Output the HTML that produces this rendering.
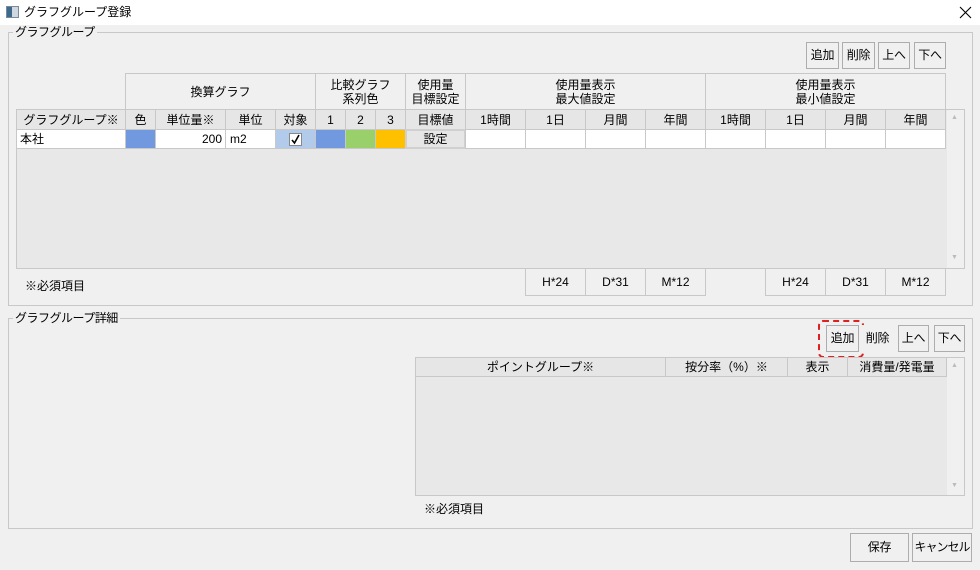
<!DOCTYPE html>
<html><head><meta charset="utf-8">
<style>
*{box-sizing:border-box;margin:0;padding:0}
html,body{width:980px;height:570px;overflow:hidden}
body{background:#f0f0f0;font-family:"Liberation Sans","Noto Sans CJK JP",sans-serif;font-size:12px;color:#000;position:relative}
.a{position:absolute;white-space:nowrap}
.tb{left:0;top:0;width:980px;height:25px;background:#fff}
.gb{border:1px solid #c8c8c8}
.lg{background:#f0f0f0;padding:0 2px;line-height:14px;font-size:12px;letter-spacing:-0.5px}
.btn{border:1px solid #adadad;background:#f0f0f0;text-align:center;line-height:24px;font-size:12px;letter-spacing:-0.3px}
.c{border:1px solid #c8c8c8;text-align:center;display:flex;align-items:center;justify-content:center;line-height:14px;font-size:12px}
.h1{background:#f0f0f0}
.h2{background:#e6e6e6}
.w{background:#fff}
</style></head><body>
<div class="a tb"></div>
<div class="a" style="left:6px;top:6px;width:13px;height:12px;border:1px solid #7a8a9a;background:linear-gradient(90deg,#3b6a8c 0 45%,#cfd8e0 45%)"></div>
<div class="a" style="left:24px;top:4px;line-height:16px">グラフグループ登録</div>
<svg class="a" style="left:959px;top:6px" width="13" height="13"><path d="M1 1L12 12M12 1L1 12" stroke="#000" stroke-width="1.1"/></svg>

<div class="a gb" style="left:8px;top:32px;width:965px;height:274px"></div>
<div class="a lg" style="left:13px;top:25px">グラフグループ</div>
<div class="a btn" style="left:806px;top:42px;width:33px;height:27px">追加</div>
<div class="a btn" style="left:842px;top:42px;width:33px;height:27px">削除</div>
<div class="a btn" style="left:878px;top:42px;width:32px;height:27px">上へ</div>
<div class="a btn" style="left:914px;top:42px;width:32px;height:27px">下へ</div>

<div class="a" style="left:16px;top:109px;width:949px;height:160px;background:#e8e8e8;border:1px solid #c8c8c8"></div>
<div class="a" style="left:947px;top:110px;width:17px;height:158px;background:#f0f0f0"></div>
<div class="a" style="left:951px;top:114px;color:#bbb;font-size:7px">▲</div>
<div class="a" style="left:951px;top:254px;color:#bbb;font-size:7px">▼</div>

<div class="a c h1" style="left:125px;top:73px;width:191px;height:37px">換算グラフ</div>
<div class="a c h1" style="left:315px;top:73px;width:91px;height:37px">比較グラフ<br>系列色</div>
<div class="a c h1" style="left:405px;top:73px;width:61px;height:37px">使用量<br>目標設定</div>
<div class="a c h1" style="left:465px;top:73px;width:241px;height:37px">使用量表示<br>最大値設定</div>
<div class="a c h1" style="left:705px;top:73px;width:241px;height:37px">使用量表示<br>最小値設定</div>

<div class="a c h2" style="left:16px;top:109px;width:110px;height:21px">グラフグループ※</div>
<div class="a c h2" style="left:125px;top:109px;width:31px;height:21px">色</div>
<div class="a c h2" style="left:155px;top:109px;width:71px;height:21px">単位量※</div>
<div class="a c h2" style="left:225px;top:109px;width:51px;height:21px">単位</div>
<div class="a c h2" style="left:275px;top:109px;width:41px;height:21px">対象</div>
<div class="a c h2" style="left:315px;top:109px;width:31px;height:21px">1</div>
<div class="a c h2" style="left:345px;top:109px;width:31px;height:21px">2</div>
<div class="a c h2" style="left:375px;top:109px;width:31px;height:21px">3</div>
<div class="a c h2" style="left:405px;top:109px;width:61px;height:21px">目標値</div>
<div class="a c h2" style="left:465px;top:109px;width:61px;height:21px">1時間</div>
<div class="a c h2" style="left:525px;top:109px;width:61px;height:21px">1日</div>
<div class="a c h2" style="left:585px;top:109px;width:61px;height:21px">月間</div>
<div class="a c h2" style="left:645px;top:109px;width:61px;height:21px">年間</div>
<div class="a c h2" style="left:705px;top:109px;width:61px;height:21px">1時間</div>
<div class="a c h2" style="left:765px;top:109px;width:61px;height:21px">1日</div>
<div class="a c h2" style="left:825px;top:109px;width:61px;height:21px">月間</div>
<div class="a c h2" style="left:885px;top:109px;width:61px;height:21px">年間</div>

<div class="a c w" style="left:16px;top:129px;width:110px;height:20px;justify-content:flex-start;padding-left:3px">本社</div>
<div class="a c" style="left:125px;top:129px;width:31px;height:20px;background:#7199df"></div>
<div class="a c w" style="left:155px;top:129px;width:71px;height:20px;justify-content:flex-end;padding-right:3px">200</div>
<div class="a c w" style="left:225px;top:129px;width:51px;height:20px;justify-content:flex-start;padding-left:4px">m2</div>
<div class="a c" style="left:275px;top:129px;width:41px;height:20px;background:#b3cbeb"><svg width="13" height="13"><rect x="0.5" y="0.5" width="12" height="12" fill="#fff" stroke="#888"/><path d="M3 7L5.5 10L10 2" stroke="#000" stroke-width="1.6" fill="none"/></svg></div>
<div class="a c" style="left:315px;top:129px;width:31px;height:20px;background:#7199df"></div>
<div class="a c" style="left:345px;top:129px;width:31px;height:20px;background:#9ad06a"></div>
<div class="a c" style="left:375px;top:129px;width:31px;height:20px;background:#ffc000"></div>
<div class="a c" style="left:405px;top:129px;width:61px;height:20px;background:#e6e6e6;border:2px solid #d0d0d0">設定</div>
<div class="a c w" style="left:465px;top:129px;width:61px;height:20px"></div>
<div class="a c w" style="left:525px;top:129px;width:61px;height:20px"></div>
<div class="a c w" style="left:585px;top:129px;width:61px;height:20px"></div>
<div class="a c w" style="left:645px;top:129px;width:61px;height:20px"></div>
<div class="a c w" style="left:705px;top:129px;width:61px;height:20px"></div>
<div class="a c w" style="left:765px;top:129px;width:61px;height:20px"></div>
<div class="a c w" style="left:825px;top:129px;width:61px;height:20px"></div>
<div class="a c w" style="left:885px;top:129px;width:61px;height:20px"></div>

<div class="a" style="left:25px;top:278px;line-height:16px">※必須項目</div>
<div class="a c" style="left:525px;top:268px;width:61px;height:28px">H*24</div>
<div class="a c" style="left:585px;top:268px;width:61px;height:28px">D*31</div>
<div class="a c" style="left:645px;top:268px;width:61px;height:28px">M*12</div>
<div class="a c" style="left:765px;top:268px;width:61px;height:28px">H*24</div>
<div class="a c" style="left:825px;top:268px;width:61px;height:28px">D*31</div>
<div class="a c" style="left:885px;top:268px;width:61px;height:28px">M*12</div>

<div class="a gb" style="left:8px;top:318px;width:965px;height:211px"></div>
<div class="a lg" style="left:13px;top:311px">グラフグループ詳細</div>
<div class="a" style="left:818px;top:320px;width:46px;height:38px;border:2px dashed #e02020;border-radius:5px"></div>
<div class="a btn" style="left:826px;top:325px;width:33px;height:27px">追加</div>
<div class="a btn" style="left:862px;top:325px;width:31px;height:27px;border-color:transparent">削除</div>
<div class="a btn" style="left:898px;top:325px;width:31px;height:27px">上へ</div>
<div class="a btn" style="left:934px;top:325px;width:31px;height:27px">下へ</div>

<div class="a" style="left:415px;top:357px;width:550px;height:139px;background:#e8e8e8;border:1px solid #c8c8c8"></div>
<div class="a" style="left:947px;top:358px;width:17px;height:137px;background:#f0f0f0"></div>
<div class="a" style="left:951px;top:362px;color:#bbb;font-size:7px">▲</div>
<div class="a" style="left:951px;top:482px;color:#bbb;font-size:7px">▼</div>
<div class="a c h2" style="left:415px;top:357px;width:251px;height:20px">ポイントグループ※</div>
<div class="a c h2" style="left:665px;top:357px;width:123px;height:20px">按分率（%）※</div>
<div class="a c h2" style="left:787px;top:357px;width:61px;height:20px">表示</div>
<div class="a c h2" style="left:847px;top:357px;width:100px;height:20px">消費量/発電量</div>
<div class="a" style="left:424px;top:501px;line-height:16px">※必須項目</div>

<div class="a btn" style="left:850px;top:533px;width:59px;height:29px;line-height:27px">保存</div>
<div class="a btn" style="left:912px;top:533px;width:60px;height:29px;line-height:27px;letter-spacing:-1px">キャンセル</div>
</body></html>
